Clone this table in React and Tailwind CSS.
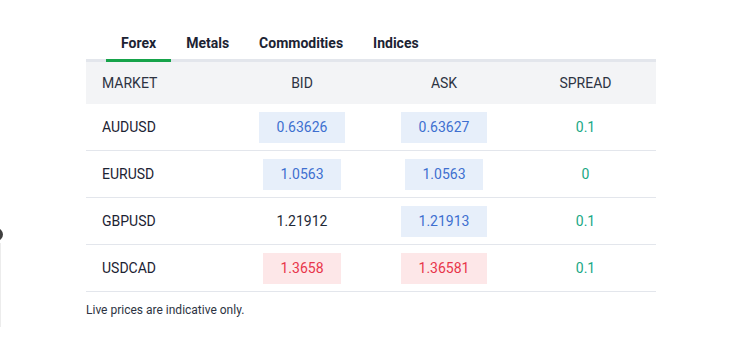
import React from "react";

const rows = [
  { m: "AUDUSD", bid: "0.63626", bidT: "blue", ask: "0.63627", askT: "blue", s: "0.1" },
  { m: "EURUSD", bid: "1.0563", bidT: "blue", ask: "1.0563", askT: "blue", s: "0" },
  { m: "GBPUSD", bid: "1.21912", bidT: "none", ask: "1.21913", askT: "blue", s: "0.1" },
  { m: "USDCAD", bid: "1.3658", bidT: "red", ask: "1.36581", askT: "red", s: "0.1" },
];

function Price({ v, t }) {
  if (t === "blue")
    return <span className="inline-flex h-[31px] items-center px-[17.5px] bg-[#e7effa] text-[#3e6fd0]">{v}</span>;
  if (t === "red")
    return <span className="inline-flex h-[31px] items-center px-[17.5px] bg-[#fde7e8] text-[#e8354a]">{v}</span>;
  return <span className="inline-flex h-[31px] items-center px-[17.5px] text-[#1f2937]">{v}</span>;
}

const cols = "grid grid-cols-[145px_142px_142px_141px]";

export default function App() {
  return (
    <div className="relative w-[753px] h-[352px] bg-white overflow-hidden" style={{ fontFamily: "Roboto, 'Liberation Sans', sans-serif" }}>
      <div className="absolute left-[-10px] top-[228px] w-[13px] h-[13px] rounded-full bg-[#3f3f3f]" />
      <div className="absolute left-0 top-[243px] w-px h-[84px] bg-[#ececec]" />
      <div className="ml-[86px] w-[570px] pt-[33px]">
        <div className="flex pl-[20px]">
          {["Forex", "Metals", "Commodities", "Indices"].map((t, i) => (
            <div
              key={t}
              className={
                "px-[15px] pb-[6px] text-[14px] leading-[20px] font-bold text-[#1c2333] border-b-[3px] relative z-10 " +
                (i === 0 ? "border-[#16a34a]" : "border-transparent")
              }
            >
              {t}
            </div>
          ))}
        </div>
        <div className="h-[3px] bg-[#e3e6ec] -mt-[3px]" />
        <div className={cols + " h-[42px] bg-[#f3f4f6] text-[14px] text-[#2d3342] items-center"}>
          <div className="pl-4">MARKET</div>
          <div className="text-center">BID</div>
          <div className="text-center">ASK</div>
          <div className="text-center">SPREAD</div>
        </div>
        {rows.map((r) => (
          <div key={r.m} className={cols + " h-[47px] items-center border-b border-[#e3e6ec] text-[14px]"}>
            <div className="pl-4 text-[#1c2333]">{r.m}</div>
            <div className="text-center"><Price v={r.bid} t={r.bidT} /></div>
            <div className="text-center"><Price v={r.ask} t={r.askT} /></div>
            <div className="text-center text-[#19a885]">{r.s}</div>
          </div>
        ))}
        <div className="pt-[10px] text-[12px] leading-[16px] text-[#2d3342]">Live prices are indicative only.</div>
      </div>
    </div>
  );
}
